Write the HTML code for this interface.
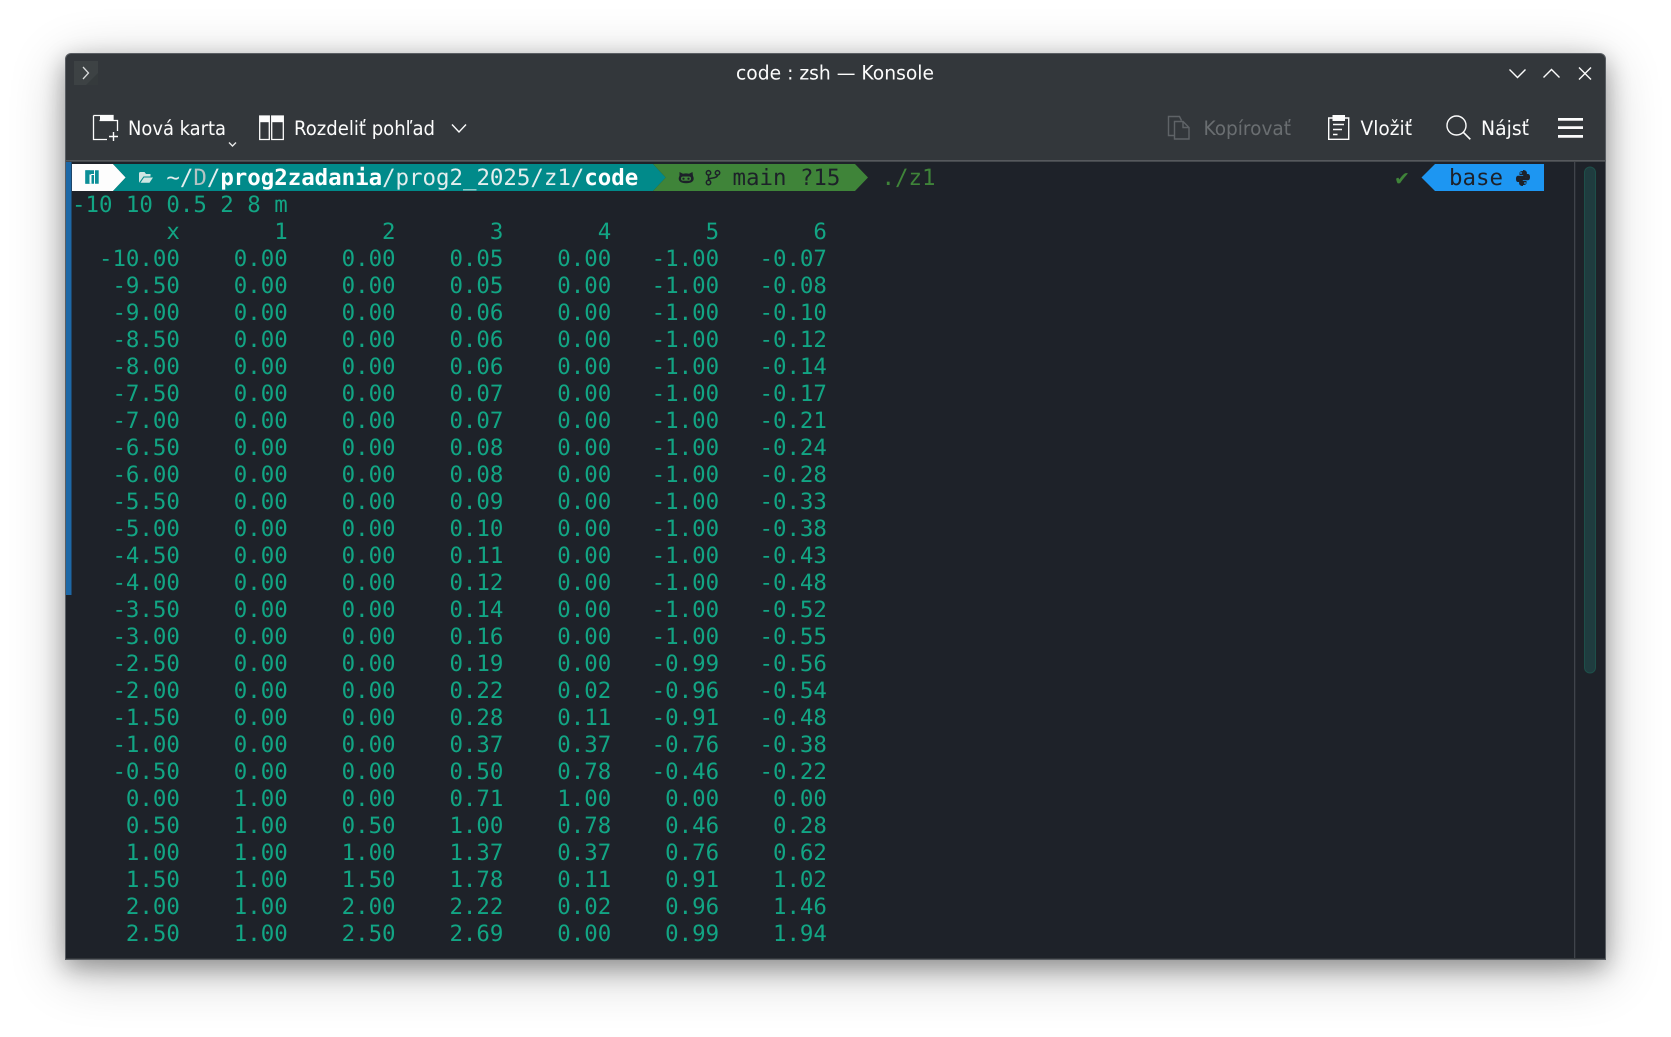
<!DOCTYPE html>
<html lang="sk"><head><meta charset="utf-8"><title>code : zsh — Konsole</title>
<style>
html,body{margin:0;padding:0;width:1671px;height:1037px;overflow:hidden;background:#fff}
#win{position:absolute;left:65px;top:53px;width:1539px;height:905px;border:1px solid #5a5e63;border-radius:6px 6px 0 0;background:#33373b;box-shadow:0 8px 24px rgba(0,0,0,.32),0 12px 56px rgba(0,0,0,.24)}
#term{position:absolute;left:66px;top:162px;width:1539px;height:796px;background:#1e2229}
svg{position:absolute;left:0;top:0}
pre{position:absolute;margin:0;font:22.4px/27px "DejaVu Sans Mono","Liberation Mono",monospace;text-rendering:geometricPrecision;white-space:pre}
#out{left:72px;top:192px;color:#12a584}
.t{font-family:"DejaVu Sans","Liberation Sans",sans-serif;font-size:19.5px;fill:#fcfcfc}
</style></head><body>
<div id="win"></div><div id="term"></div>
<svg width="1671" height="1037" viewBox="0 0 1671 1037" fill="none">
<rect x="66" y="160" width="1539" height="1.5" fill="#56595d"/>
<rect x="66" y="162" width="5.5" height="433" fill="#1d68a6"/>
<rect x="1574" y="162" width="1.3" height="796" fill="#40444b"/>
<rect x="1584.5" y="167" width="11" height="506" rx="5.5" fill="#1f3c3f" stroke="#1d4f49"/>
<!-- app button -->
<path d="M74 61h24v24H74z" fill="#3d4244"/><path d="M86 85L98 73V85z" fill="#353a3c"/>
<path d="M83 67l5.5 6-5.500 6" stroke="#d8dadb" stroke-width="1.3"/>
<text class="t" x="736" y="79.500" textLength="198" lengthAdjust="spacingAndGlyphs">code : zsh — Konsole</text>
<path d="M1509.500 69.500l8 8 8-8M1543.500 77.500l8-8 8 8M1579 67.500l12 12M1591 67.500l-12 12" stroke="#fcfcfc" stroke-width="1.4"/>
<!-- new tab -->
<path d="M93.500 115.500V139.500H107M93.500 115.500H113V120.500H117.500V131M99.500 120.500H113" stroke="#fcfcfc" stroke-width="1.3"/>
<rect x="100" y="116" width="13" height="4.800" fill="#fcfcfc"/>
<path d="M109 136.500h9M113.500 132v9" stroke="#fcfcfc" stroke-width="1.4"/>
<text class="t" x="128" y="135" textLength="98" lengthAdjust="spacingAndGlyphs">Nová karta</text>
<path d="M229 142.500l3.500 3.500 3.500-3.500" stroke="#e8e8e8" stroke-width="1.4"/>
<!-- split -->
<path d="M259.700 116h9.600v23.500h-9.600zM271.700 116h11.600v23.500h-11.600z" stroke="#fcfcfc" stroke-width="1.3"/>
<rect x="259.500" y="115.600" width="10" height="6.600" fill="#fcfcfc"/><rect x="271.500" y="115.600" width="12" height="6.600" fill="#fcfcfc"/>
<text class="t" x="294" y="135" textLength="141" lengthAdjust="spacingAndGlyphs">Rozdeliť pohľad</text>
<path d="M452 124.500l7 7.500 7-7.500" stroke="#fcfcfc" stroke-width="1.4"/>
<!-- copy -->
<path d="M1174 135.500h-5.500V116.500h11l2 4M1174.500 121.500h8.500l6 6v11.500h-14.500zM1183 121.500v6h6" stroke="#5f6367" stroke-width="1.4"/>
<text class="t" x="1203.500" y="135" textLength="87.500" lengthAdjust="spacingAndGlyphs" style="fill:#6a6e71">Kopírovať</text>
<!-- paste -->
<path d="M1333 118H1328.700V139.300H1348.700V118H1345" stroke="#fcfcfc" stroke-width="1.4"/>
<rect x="1332.500" y="115" width="12.500" height="6" fill="#fcfcfc"/>
<path d="M1333 124.500h11M1333 129.500h9M1333 134.500h4.500" stroke="#fcfcfc" stroke-width="1.4"/>
<text class="t" x="1360.500" y="135" textLength="51.500" lengthAdjust="spacingAndGlyphs">Vložiť</text>
<!-- search -->
<circle cx="1456.500" cy="125.500" r="9.500" stroke="#fcfcfc" stroke-width="1.4"/><path d="M1463.300 132.300l7 7" stroke="#fcfcfc" stroke-width="1.6"/>
<text class="t" x="1481" y="135" textLength="48" lengthAdjust="spacingAndGlyphs">Nájsť</text>
<!-- menu -->
<path d="M1558 118h25v2.800h-25zM1558 126.200h25v2.800h-25zM1558 135h25v2.800h-25z" fill="#fcfcfc"/>
<!-- powerline -->
<path d="M72 164H113L125.700 177.500 113 191H72z" fill="#fdfdfd"/>
<path d="M113 164H653L665.700 177.500 653 191H113L125.700 177.500z" fill="#018a8a"/>
<path d="M653 164H855L868 177.500 855 191H653L665.700 177.500z" fill="#3f8439"/>
<path d="M1421.500 177.500L1435 164H1544V191H1435z" fill="#1d96f2"/>
<path d="M85.300 170.300H94V174H91V183.700H85.300zM95 170.300H98.700V183.700H95zM91.500 175H94V183.700H91.500z" fill="#0b8f97"/>
<path d="M85.300 170.300H90V183.700H85.300z" fill="#0b8f97"/><rect x="89.500" y="174.500" width="1.800" height="9.200" fill="#fdfdfd"/>
<path d="M139 182.700V173.500Q139 172 140.500 172H144.500L146 174H150.500V176.500H143.500L139 182.700ZM140.500 182.700L144 177.500H153L149.500 182.700Z" fill="#cfe6e3"/>
<!-- github -->
<path d="M679.500 172l3.500 1.800q3-.8 6 0l3.500-1.800.5 4q.7 1 .7 2.500c0 3-2.500 4.700-7.500 4.700s-7.500-1.700-7.500-4.700q0-1.500.8-2.500z" fill="#1d2129"/>
<rect x="681" y="176.500" width="10" height="4.200" rx="2" fill="#3f8439"/>
<circle cx="683.500" cy="178.700" r="1.100" fill="#1d2129"/><circle cx="688.500" cy="178.700" r="1.100" fill="#1d2129"/>
<!-- branch -->
<circle cx="708.500" cy="172.800" r="2.200" stroke="#1d2129" stroke-width="1.500"/><circle cx="717.500" cy="172.800" r="2.200" stroke="#1d2129" stroke-width="1.500"/><circle cx="708.500" cy="182.500" r="2.200" stroke="#1d2129" stroke-width="1.500"/>
<path d="M708.500 175V180.300M717.500 175C717.500 179 709 177 708.500 180" stroke="#1d2129" stroke-width="1.500"/>
<!-- python -->
<path id="py" d="M1523 171c-2.500 0-3.500.8-3.500 2.300V175h3.700v.8h-5.200c-1.300 0-2 1.200-2 3.200s.7 3 2 3h1.300v-1.800c0-1.300 1-2.200 2.200-2.200h3.200c1.200 0 2.200-1 2.200-2.200v-3c0-1.500-1.500-2.800-3.900-2.800z" fill="#1d2129"/>
<path d="M1523 171c-2.500 0-3.500.8-3.500 2.300V175h3.700v.8h-5.200c-1.300 0-2 1.200-2 3.200s.7 3 2 3h1.300v-1.800c0-1.300 1-2.200 2.200-2.200h3.200c1.200 0 2.200-1 2.200-2.200v-3c0-1.500-1.500-2.800-3.900-2.800z" fill="#1d2129" transform="rotate(180 1523 178)"/>
<circle cx="1521" cy="173" r=".9" fill="#1d96f2"/><circle cx="1525" cy="183" r=".9" fill="#1d96f2"/>
<text x="1394" y="185" font-family="DejaVu Sans" font-size="19" fill="#3f8439">✔</text>
</svg>
<pre style="left:72px;top:165px;color:#e4eeee"><span style="visibility:hidden">       </span>~/<span style="color:#b4c4c4">D</span>/<b style="color:#fff">prog2zadania</b>/prog2_2025/z1/<b style="color:#fff">code</b></pre>
<pre style="left:72px;top:165px;color:#1d2129"><span style="visibility:hidden">                                                 </span>main ?15</pre>
<pre style="left:881.500px;top:165px;color:#3f8439">./z1</pre>
<pre style="left:1449px;top:165px;color:#1d2129">base</pre>
<pre id="out">-10 10 0.5 2 8 m
       x       1       2       3       4       5       6
  -10.00    0.00    0.00    0.05    0.00   -1.00   -0.07
   -9.50    0.00    0.00    0.05    0.00   -1.00   -0.08
   -9.00    0.00    0.00    0.06    0.00   -1.00   -0.10
   -8.50    0.00    0.00    0.06    0.00   -1.00   -0.12
   -8.00    0.00    0.00    0.06    0.00   -1.00   -0.14
   -7.50    0.00    0.00    0.07    0.00   -1.00   -0.17
   -7.00    0.00    0.00    0.07    0.00   -1.00   -0.21
   -6.50    0.00    0.00    0.08    0.00   -1.00   -0.24
   -6.00    0.00    0.00    0.08    0.00   -1.00   -0.28
   -5.50    0.00    0.00    0.09    0.00   -1.00   -0.33
   -5.00    0.00    0.00    0.10    0.00   -1.00   -0.38
   -4.50    0.00    0.00    0.11    0.00   -1.00   -0.43
   -4.00    0.00    0.00    0.12    0.00   -1.00   -0.48
   -3.50    0.00    0.00    0.14    0.00   -1.00   -0.52
   -3.00    0.00    0.00    0.16    0.00   -1.00   -0.55
   -2.50    0.00    0.00    0.19    0.00   -0.99   -0.56
   -2.00    0.00    0.00    0.22    0.02   -0.96   -0.54
   -1.50    0.00    0.00    0.28    0.11   -0.91   -0.48
   -1.00    0.00    0.00    0.37    0.37   -0.76   -0.38
   -0.50    0.00    0.00    0.50    0.78   -0.46   -0.22
    0.00    1.00    0.00    0.71    1.00    0.00    0.00
    0.50    1.00    0.50    1.00    0.78    0.46    0.28
    1.00    1.00    1.00    1.37    0.37    0.76    0.62
    1.50    1.00    1.50    1.78    0.11    0.91    1.02
    2.00    1.00    2.00    2.22    0.02    0.96    1.46
    2.50    1.00    2.50    2.69    0.00    0.99    1.94</pre>
</body></html>
